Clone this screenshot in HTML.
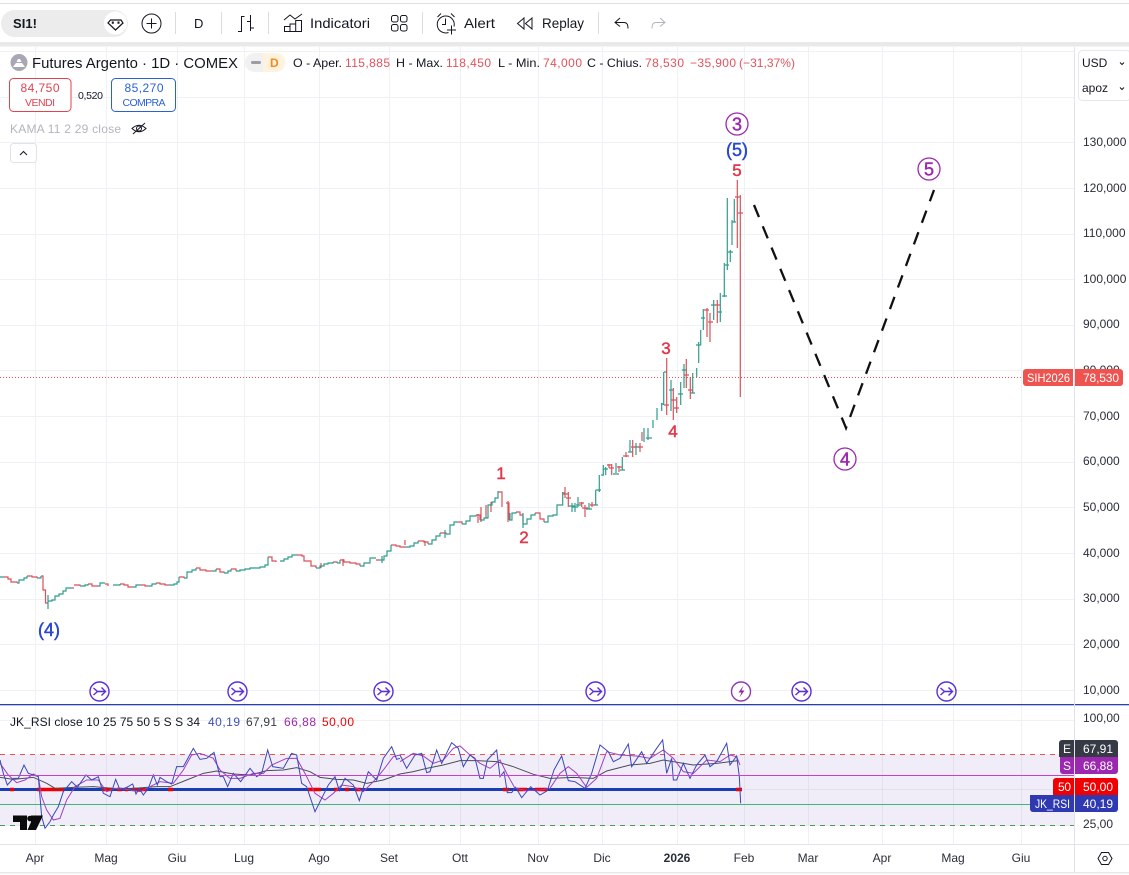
<!DOCTYPE html>
<html lang="it"><head><meta charset="utf-8"><title>Futures Argento</title>
<style>
html,body{margin:0;padding:0;background:#fff;width:1129px;height:875px;overflow:hidden}
svg{display:block}
text{font-family:"Liberation Sans",sans-serif;font-size:12px;fill:#131722}
.ax{font-size:12px;fill:#2a2e39}
.t{font-size:12px;fill:#2a2e39;text-anchor:middle}
.r{fill:#e2525c}
.w{fill:#fff;font-size:12px}
.ic{fill:none;stroke:#131722;stroke-width:1}
.lb{text-anchor:middle;font-size:18px;stroke-width:.45}
.p{fill:#9c27b0;stroke:#9c27b0}
.b{fill:#2a46d0;stroke:#2a46d0}
.e{fill:#e2364a;stroke:#e2364a;font-size:17px}
</style></head><body>
<svg width="1129" height="875" viewBox="0 0 1129 875" xmlns="http://www.w3.org/2000/svg">
<defs>
<g id="ev" fill="none" stroke="#5b2fd6" stroke-width="1.400"><circle r="9.500"/><path d="M-6 -3.500L-2 0L-6 3.500M-3 0H6M2 -4L6 0L2 4"/></g>
</defs>
<rect width="1129" height="875" fill="#fff"/>
<!-- toolbar -->
<rect x="0" y="3" width="1129" height="1" fill="#e0e0e0"/>
<rect x="0" y="42" width="1129" height="4.500" fill="#e9e9e9"/>
<rect x="1" y="10" width="127" height="27" rx="13.500" fill="#ececec"/>
<text x="13" y="28" style="font-size:13px;font-weight:bold" textLength="24">SI1!</text>
<circle cx="115.500" cy="23" r="11.500" fill="#fff"/>
<path d="M110.500 20h10.500l2 3-7.500 7-7.500-7z" fill="none" stroke="#131722" stroke-width="1.200"/>
<path d="M111.800 21.500h2v2.200h-2zM117.500 21.500h2v2.200h-2z" fill="#131722"/>
<circle cx="151.500" cy="23.500" r="9.500" class="ic"/><path d="M151.500 18.500v10M146.500 23.500h10" class="ic"/>
<g fill="#dcdcdc"><rect x="175" y="12" width="1" height="22"/><rect x="221" y="12" width="1" height="22"/><rect x="268" y="12" width="1" height="22"/><rect x="422" y="12" width="1" height="22"/><rect x="598" y="12" width="1" height="22"/></g>
<text x="194" y="28" style="font-size:13px">D</text>
<path d="M241.500 16v16M241.500 16.500h3M238 31.500h3.500M250.500 15v16M247 21.500h3.500M250.500 28h3.500" class="ic"/>
<path d="M284 20l6-5 5 4 7-5M284 31.500h18M284.500 31.500v-5h5.500v5M290 31.500v-7.500h5.700v7.500M295.700 31.500v-11h5.800v11" class="ic"/>
<text x="310" y="28" style="font-size:14px" textLength="60" lengthAdjust="spacingAndGlyphs">Indicatori</text>
<g class="ic"><rect x="391.500" y="15.500" width="6.500" height="6.500" rx="2"/><rect x="400.500" y="15.500" width="6.500" height="6.500" rx="2"/><rect x="391.500" y="24.500" width="6.500" height="6.500" rx="2"/><rect x="400.500" y="24.500" width="6.500" height="6.500" rx="2"/></g>
<path d="M454 26.500a8.500 8.500 0 1 0-5.500 6M445.500 18.500v6h-3.500M437.500 17l3.500-3.500M451 13.500l3.500 3.500M451.500 25.500v9M447 30h9" class="ic"/>
<text x="464" y="28" style="font-size:14px" textLength="31" lengthAdjust="spacingAndGlyphs">Alert</text>
<path d="M524 18l-6.500 5.500 6.500 5.500zM532 18l-6.500 5.500 6.500 5.500z" class="ic"/>
<text x="542" y="28" style="font-size:14px" textLength="42" lengthAdjust="spacingAndGlyphs">Replay</text>
<path d="M620 18l-5 4.500 5 4M615 22.500h9c3 0 4 2 4 6" class="ic"/>
<path d="M660 18l5 4.500-5 4M665 22.500h-9c-3 0-4 2-4 6" fill="none" stroke="#b2b5be"/>
<!-- grid -->
<path d="M35.500 47V844M106.500 47V844M177.500 47V844M244.500 47V844M319.500 47V844M389.500 47V844M460.500 47V844M538.500 47V844M602.500 47V844M677.500 47V844M744.500 47V844M808.500 47V844M882.500 47V844M953.500 47V844M1021.500 47V844" stroke="#f0f1f4" fill="none"/>
<path d="M0 51.500H1074M0 97.500H1074M0 142.500H1074M0 188.500H1074M0 234.500H1074M0 279.500H1074M0 325.500H1074M0 370.500H1074M0 416.500H1074M0 462.500H1074M0 507.500H1074M0 553.500H1074M0 599.500H1074M0 644.500H1074M0 690.500H1074M0 720.500H1074M0 754.500H1074M0 789.500H1074M0 825.500H1074" stroke="#f0f1f4" fill="none"/>
<!-- legend -->
<circle cx="19" cy="62.500" r="8.500" fill="#a8a8b4"/><path d="M13 67l3-4h6l3 4zM16.500 62l1.500-3h2l1.500 3z" fill="#fff"/>
<text x="32" y="68" style="font-size:15px" textLength="206" lengthAdjust="spacingAndGlyphs">Futures Argento · 1D · COMEX</text>
<rect x="245" y="53" width="40" height="19" rx="9.500" fill="#f1f1f1"/><path d="M275 53h1a9.500 9.500 0 0 1 0 19h-13v-19z" fill="#fff3e0"/>
<rect x="251" y="61" width="10" height="3" rx="1.500" fill="#9a9ea8"/>
<text x="270" y="67" style="font-size:12px;fill:#f5891a;font-weight:bold">D</text>
<text x="293" y="67" textLength="49" lengthAdjust="spacingAndGlyphs">O - Aper.</text><text x="345" y="67" class="r" textLength="45">115,885</text>
<text x="396" y="67" textLength="47" lengthAdjust="spacingAndGlyphs">H - Max.</text><text x="446" y="67" class="r" textLength="45">118,450</text>
<text x="498" y="67" textLength="42" lengthAdjust="spacingAndGlyphs">L - Min.</text><text x="543" y="67" class="r" textLength="39">74,000</text>
<text x="587" y="67" textLength="55" lengthAdjust="spacingAndGlyphs">C - Chius.</text><text x="645" y="67" class="r" textLength="39">78,530</text>
<text x="690" y="67" class="r" textLength="46">−35,900</text><text x="739" y="67" class="r" textLength="56">(−31,37%)</text>
<rect x="9.500" y="78.500" width="61.500" height="33" rx="4" fill="#fff" stroke="#e2434f"/>
<text x="40" y="92" style="font-size:12px;fill:#e2434f;text-anchor:middle" textLength="39">84,750</text>
<text x="40" y="106" style="font-size:10.500px;fill:#e2434f;text-anchor:middle" textLength="30">VENDI</text>
<text x="78" y="99" style="font-size:10.500px" textLength="25">0,520</text>
<rect x="111.500" y="78.500" width="64" height="33" rx="4" fill="#fff" stroke="#2962d8"/>
<text x="144" y="92" style="font-size:12px;fill:#2962d8;text-anchor:middle" textLength="39">85,270</text>
<text x="144" y="106" style="font-size:10.500px;fill:#2962d8;text-anchor:middle" textLength="43">COMPRA</text>
<text x="10" y="133" style="font-size:12px;fill:#b2b5be" textLength="111">KAMA 11 2 29 close</text>
<path d="M132 128.500q7-6.500 14 0q-7 6.500-14 0zM133 134l12-11" class="ic"/><circle cx="139" cy="128.500" r="2.500" class="ic"/>
<rect x="10.500" y="143.500" width="26" height="19" rx="3" fill="#fff" stroke="#e0e3eb"/><path d="M20 155l3.500-3.500 3.500 3.500" class="ic"/>
<!-- last price line -->
<path d="M0 377.500H1023" stroke="#ef5350" stroke-dasharray="1 2" fill="none"/>
<!-- price: red -->
<path fill="none" stroke="#d9525a" stroke-width="1.200" d="M4 577H8V579H11V582H17V583M27 576H32V577H37V578M41 576H43V590H45.500V603H48M72 588H74M74 585H80V586M88 584H92V586H98M105 584H108V586M120 584H124V585H128V587H133M141 585H145V586H148M156 583H160V584H165V585H169M179 577H184V578M196 568H200V570H206V571H212M216 569H220V572H224V573M231 569H236V571M268 557H272V561H276V562M297 555H302V556H304V561H311V566H316V568M333 562H337V563M340 560H344V562H350V563H356V564H360V566M376 560H380M391 545H396V546H400V547H406M418 541H424V542H428V544M440 533H446V534M458 522H462V524M476 515H480V520M498 492H502V507M506 503H509V520M516 512H520V515H523V524M535 513H540V519H544V522M486 505V518M425 541V546M508 501V522M491 502V512M405 540V545M478 514V523M343 559V566M321 568V563M481 507V522"/>
<!-- price: teal -->
<path fill="none" stroke="#2f9c8c" stroke-width="1.200" d="M0 577H4M17 583H19V580H24V578H27V576M37 578H41V576M48 609V595M48 601H52V600H55V596H59V594H63V591H66V588H72M80 586H85V585H88V584M98 586H100V583H105M113 585H116V585H120V584M133 587H136V585H141M148 586H152V584H156V583M169 585H174V584H177V582H179V577M184 578H187V572H192V570H196V568M212 571H216V569M224 573H228V571H231V569M236 571H240V570H245V569H250V568H256V568H260V567H265V565H268V557M280 561H284V559H288V557H292V555H297M316 568H320V566H324V564H328V563H333V562M337 563H340V560M360 566H364V563H370V558H376M380 560H384V556H387V551H391V545M406 547H410V546H414V543H418V541M428 544H432V540H436V536H440V533M446 534H450V525H454V522H458M462 524H466V521H470V516H476V515M480 520H484V518H488V505H492V502H495V498H498V491M509 520H512V513H516V512M523 528V513M523 524H527V519H531V515H535V513M544 522H548V516H553V515H557V505H560M510 513V520M445 530V538M382 556V563"/>
<!-- right bars -->
<g fill="none" stroke="#2f9c8c" stroke-width="1.200"><path d="M560 505H562.700V492M562.700 493H565M572 503V512M569 506H575M575 503V512M572 507H578M578 497V507M576 505H581M589 503V509M586 509H592M595.700 490V505M594 505H598M599.300 475V492M595.700 490H601M603.300 465V475M601 475H604M605.700 467V475M603 469H608M616 463V473M613 474H619M622.300 457V470M620 470H625M630 440V452M628 452H633M636 443V455M634 447H640M644 428V442M648 428V440M646 438H652M653 420V428M657 408V420M661.700 403V411M663.700 372V405M661 404H664M664 372H667M671 380V411M669 390H673M680.700 382V405M678 394H683M684 364V388M682 370H687M692.700 373V393M690 393H695M696.700 368V377M698.700 342V363M696 345H701M700.700 330V345M703.300 309V330M701 318H705M713.700 300V320M711 305H716M720.300 293V322M718 312H722M724.300 263V297M722 296H727M727.300 198V270M725 265H729M730.300 250V262M728 252H733M732 220V245M734.300 199V222M732 222H736"/></g>
<g fill="none" stroke="#d9525a" stroke-width="1.200"><path d="M565 487V498M562.700 494H568M568.300 492V507M566 498H571M581.700 502V507M579 503H584M585 505V517M582 508H588M592 502V507M590 505H595M609 464V468M607 465H612M611.700 464V475M609 468H614M619 466V472M617 467H622M626 452V457M623 456H629M632.700 440V457M631 447H636M640 443V452M638 447H643M642 432V441M666.700 358V415M664 405H669M673.300 388V420M671 400H676M676.700 397V413M674 408H679M686.300 359V388M684 375H689M690.300 377V399M688 390H693M707 308V337M704 310H709M710 313V342M708 322H713M717.300 300V323M715 305H720M737.300 180V248M735 197H740M740.300 195V397M738 213H743"/></g>
<!-- Annotations -->
<path d="M754 205L846 428L934 190" fill="none" stroke="#111" stroke-width="2.300" stroke-dasharray="13 10"/>
<circle cx="737" cy="124" r="11" fill="#fff" stroke="#9c27b0" stroke-width="1.300"/><text x="737" y="130.500" class="lb p">3</text>
<text x="737" y="156" class="lb b">(5)</text>
<text x="737" y="176" class="lb e">5</text>
<circle cx="929" cy="169" r="11" fill="#fff" stroke="#9c27b0" stroke-width="1.300"/><text x="929" y="175.500" class="lb p">5</text>
<circle cx="845" cy="459" r="11" fill="#fff" stroke="#9c27b0" stroke-width="1.300"/><text x="845" y="465.500" class="lb p">4</text>
<text x="666" y="354" class="lb e">3</text>
<text x="673" y="437" class="lb e">4</text>
<text x="501" y="479" class="lb e">1</text>
<text x="524" y="543" class="lb e">2</text>
<text x="49" y="636" class="lb b">(4)</text>
<!-- events -->
<use href="#ev" x="99.500" y="691.500"/><use href="#ev" x="237.500" y="691.500"/><use href="#ev" x="383.500" y="691.500"/><use href="#ev" x="595.500" y="691.500"/><use href="#ev" x="801.500" y="691.500"/><use href="#ev" x="946.500" y="691.500"/>
<circle cx="741" cy="691.500" r="9.500" fill="#fff" stroke="#8e3ab5" stroke-width="1.400"/><path d="M743.500 685.500l-5 7h3l-2 5 5-7h-3z" fill="#8e24aa"/>
<!-- RSI -->
<rect x="0" y="704" width="1129" height="1.300" fill="#2a3fae"/>
<text x="10" y="726" style="font-size:12px" textLength="190">JK_RSI close 10 25 75 50 5 S S 34</text>
<text x="208" y="726" style="font-size:12px;fill:#3f4fb5" textLength="32">40,19</text>
<text x="246" y="726" style="font-size:12px;fill:#363a45" textLength="31">67,91</text>
<text x="284" y="726" style="font-size:12px;fill:#9c27b0" textLength="32">66,88</text>
<text x="322" y="726" style="font-size:12px;fill:#f00000" textLength="32">50,00</text>
<rect x="0" y="755" width="1074" height="70.500" fill="#7e57c2" fill-opacity=".11"/>
<path d="M0 754.500H1074" stroke="#ef5350" stroke-dasharray="5 5" fill="none"/>
<path d="M0 825.500H1074" stroke="#4a9a5a" stroke-dasharray="5 5" fill="none"/>
<path d="M0 804.500H1074" stroke="#3cb878" fill="none"/>
<rect x="0" y="788" width="741" height="3" fill="#1a3cb5"/>
<path d="M10 789.500h4M37 789.500h27M102 789.500h10M117 789.500h5M125 789.500h3M132 789.500h14M168 789.500h5M308 789.500h13M334 789.500h4M345 789.500h4M355 789.500h6M503 789.500h6M517 789.500h10M535 789.500h12M736 789.500h6" stroke="#f00000" stroke-width="3.500" fill="none"/>
<g fill="none" stroke-width="3" transform="translate(0 670) scale(.33333)">
<polyline stroke="#4a4d57" points="0,322 40,328 100,322 140,340 165,355 220,352 280,350 340,355 400,355 470,350 510,350 560,330 610,310 650,303 700,312 750,315 800,302 850,300 890,293 930,305 960,322 1010,328 1060,330 1100,340 1150,330 1200,312"/>
<polyline stroke="#a23ec4" points="0,280 25,315 50,338 75,330 100,312 115,320 125,380 140,420 160,450 180,445 200,390 225,350 260,330 295,330 320,365 345,355 380,358 420,365 450,350 480,335 520,340 550,300 575,255 600,250 640,265 660,300 690,325 720,325 760,310 790,310 815,285 860,265 890,265 915,310 945,370 975,390 1000,370 1025,345 1060,350 1090,365 1120,335 1150,300 1180,260 1200,255"/>
<polyline stroke="#3a48b8" points="0,270 10,310 22,345 40,325 55,325 72,285 85,310 100,315 115,320 125,440 135,475 150,455 160,435 175,410 190,365 215,335 232,352 258,315 275,330 295,320 310,370 330,380 347,328 360,360 380,352 398,342 408,372 418,355 430,375 445,355 460,315 472,345 480,322 500,335 515,342 530,290 550,290 580,235 600,268 620,265 642,247 660,320 670,320 683,350 700,310 722,335 750,295 770,320 785,310 803,240 818,290 850,295 875,250 890,255 905,340 920,350 945,425 965,385 985,345 1005,320 1018,362 1035,325 1060,345 1078,392 1105,305 1130,330 1150,265 1175,230 1190,268 1200,265"/>
</g>
<g fill="none" stroke-width="3" transform="translate(400 670) scale(.33333)">
<polyline stroke="#4a4d57" points="0,312 40,305 80,295 130,285 180,272 230,272 290,275 340,290 400,313 450,325 520,322 580,325 620,303 690,285 750,280 790,270 880,285 950,280 1015,272"/>
<polyline stroke="#a23ec4" points="0,275 40,250 70,258 100,280 130,270 160,235 180,228 210,255 240,280 270,295 300,270 320,310 345,355 380,362 420,360 450,355 480,310 505,290 530,310 560,352 590,325 620,245 660,255 710,258 750,265 790,240 820,265 850,305 880,310 920,270 960,275 990,255 1010,260 1020,285"/>
<polyline stroke="#3a48b8" points="0,255 20,295 45,255 65,250 80,308 90,305 110,240 125,280 155,218 175,235 190,290 210,255 225,265 240,325 250,325 262,270 290,240 300,320 312,305 322,368 335,368 347,352 365,383 392,350 420,375 442,362 462,300 485,258 505,332 525,335 555,355 575,310 600,225 625,245 640,275 660,265 685,222 695,290 725,245 740,280 770,235 788,210 800,310 815,265 820,330 830,330 850,280 870,325 890,285 915,255 930,290 950,275 980,220 990,285 1010,258 1018,320 1022,400"/>
</g>
<!-- magenta level, on top of the oscillator -->
<rect x="0" y="775" width="1074" height="1" fill="#c63fd0"/>
<!-- TV logo -->
<path d="M13 815.500h14v14.500h-7v-8h-7zM31 815.500h12l-7 14.500h-8.500l3.500-8z" fill="#0b0b0b"/><circle cx="30" cy="818.500" r="2.800" fill="#0b0b0b"/>
<!-- axes -->
<rect x="1074" y="47" width="1" height="825" fill="#e0e3eb"/>
<rect x="0" y="844" width="1129" height="1" fill="#e0e3eb"/>
<rect x="0" y="872" width="1129" height="1.500" fill="#e8e8e8"/>
<rect x="1078.500" y="50.500" width="52" height="50" rx="4" fill="#fff" stroke="#e6e8ee"/>
<text x="1082" y="67" style="font-size:12px">USD</text><path d="M1120 62.500l2 2 2-2" class="ic"/>
<text x="1082" y="92" style="font-size:12px">apoz</text><path d="M1120 87.500l2 2 2-2" class="ic"/>
<text class="ax" x="1083" y="146">130,000</text><text class="ax" x="1083" y="192">120,000</text><text class="ax" x="1083" y="237">110,000</text><text class="ax" x="1083" y="283">100,000</text>
<text class="ax" x="1083" y="328">90,000</text><text class="ax" x="1083" y="374">80,000</text><text class="ax" x="1083" y="420">70,000</text><text class="ax" x="1083" y="465">60,000</text><text class="ax" x="1083" y="511">50,000</text><text class="ax" x="1083" y="557">40,000</text><text class="ax" x="1083" y="602">30,000</text><text class="ax" x="1083" y="648">20,000</text><text class="ax" x="1083" y="694">10,000</text>
<text class="ax" x="1083" y="722">100,00</text><text class="ax" x="1083" y="828">25,00</text>
<!-- price tags -->
<path d="M1026 369h47v17h-47a3 3 0 0 1-3-3v-11a3 3 0 0 1 3-3z" fill="#ef5350"/>
<path d="M1075 369h45a3 3 0 0 1 3 3v11a3 3 0 0 1-3 3h-45z" fill="#ef5350"/>
<text x="1027" y="382" class="w" textLength="43" lengthAdjust="spacingAndGlyphs">SIH2026</text><text x="1083" y="382" class="w" textLength="36">78,530</text>
<path d="M1062 740h12v17h-15v-14a3 3 0 0 1 3-3z" fill="#363a45"/><path d="M1075 740h40a3 3 0 0 1 3 3v14h-43z" fill="#363a45"/>
<path d="M1060 757h14v17h-11a3 3 0 0 1-3-3z" fill="#9c27b0"/><path d="M1075 757h43v14a3 3 0 0 1-3 3h-40z" fill="#9c27b0"/>
<path d="M1056 778h18v17h-21v-14a3 3 0 0 1 3-3z" fill="#f00000"/><path d="M1075 778h40a3 3 0 0 1 3 3v14h-43z" fill="#f00000"/>
<path d="M1030 795h44v17h-41a3 3 0 0 1-3-3z" fill="#2f3ab2"/><path d="M1075 795h43v14a3 3 0 0 1-3 3h-40z" fill="#2f3ab2"/>
<text x="1063" y="753" class="w">E</text><text x="1083" y="753" class="w" textLength="30">67,91</text>
<text x="1063" y="770" class="w">S</text><text x="1083" y="770" class="w" textLength="30">66,88</text>
<text x="1058" y="791" class="w" textLength="13">50</text><text x="1083" y="791" class="w" textLength="30">50,00</text>
<text x="1035" y="808" class="w" textLength="35" lengthAdjust="spacingAndGlyphs">JK_RSI</text><text x="1083" y="808" class="w" textLength="30">40,19</text>
<!-- time axis -->
<text class="t" x="35" y="862">Apr</text><text class="t" x="106" y="862">Mag</text><text class="t" x="177" y="862">Giu</text><text class="t" x="244" y="862">Lug</text><text class="t" x="319" y="862">Ago</text><text class="t" x="389" y="862">Set</text><text class="t" x="460" y="862">Ott</text><text class="t" x="538" y="862">Nov</text><text class="t" x="602" y="862">Dic</text><text class="t" x="677" y="862" style="font-weight:bold">2026</text><text class="t" x="744" y="862">Feb</text><text class="t" x="808" y="862">Mar</text><text class="t" x="882" y="862">Apr</text><text class="t" x="953" y="862">Mag</text><text class="t" x="1021" y="862">Giu</text>
<path d="M1098 858.500l3.500-6h7l3.500 6-3.500 6h-7z" class="ic" stroke-width="1.200"/><circle cx="1105" cy="858.500" r="2.200" class="ic"/>
</svg>
</body></html>
